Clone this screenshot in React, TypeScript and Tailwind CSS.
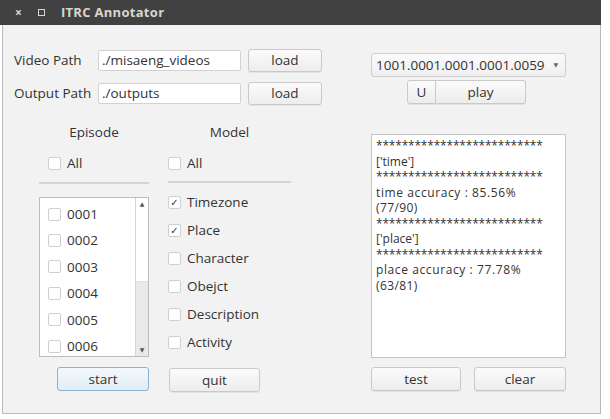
import React from 'react'

const font = "font-['Open_Sans','DejaVu_Sans',sans-serif]"

function Btn({ label, className = '' }: { label: string; className?: string }) {
  return (
    <div
      className={`flex items-center justify-center rounded-[3px] border border-[#c9c9c9] bg-gradient-to-b from-[#fbfbfb] to-[#ededed] text-[13.5px] text-[#333] shadow-[0_1px_0_rgba(0,0,0,0.06)] ${className}`}
    >
      {label}
    </div>
  )
}

function Check({ checked = false }: { checked?: boolean }) {
  return (
    <div className="flex h-[13px] w-[13px] shrink-0 items-center justify-center rounded-[2px] border border-[#cfcfcf] bg-white text-[10px] leading-none text-[#333]">
      {checked ? '✓' : ''}
    </div>
  )
}

function CheckRow({ label, checked, className = '' }: { label: string; checked?: boolean; className?: string }) {
  return (
    <div className={`flex shrink-0 items-center gap-[6px] text-[13.5px] text-[#333] ${className}`}>
      <Check checked={checked} />
      <span>{label}</span>
    </div>
  )
}

const stars = '**************************'

export default function App() {
  const episodes = ['0001', '0002', '0003', '0004', '0005', '0006']
  const models: [string, boolean][] = [
    ['Timezone', true],
    ['Place', true],
    ['Character', false],
    ['Obejct', false],
    ['Description', false],
    ['Activity', false],
  ]

  return (
    <div className={`h-[419px] w-[610px] overflow-hidden bg-white ${font}`}>
      <div className="w-[601px]">
        {/* Title bar */}
        <div className="flex h-[25px] items-center bg-[#414141] text-[#d8d5cf]">
          <span className="ml-[15px] text-[12px] font-bold leading-none">×</span>
          <span className="ml-[16px] flex h-[7px] w-[7px] items-center justify-center border-[1.5px] border-[#d8d5cf]" />
          <span className="ml-[16px] text-[13px] font-bold tracking-[0.3px]">ITRC Annotator</span>
        </div>

        {/* Body */}
        <div className="ml-[2px] flex h-[389px] border-x border-b border-[#b9b9b9] bg-[#f2f2f2]">
          {/* Left side */}
          <div className="ml-[11px] flex w-[320px] flex-col pt-[24px]">
            <div className="flex h-[23px] items-center">
              <span className="w-[84px] text-[13.5px] text-[#333]">Video Path</span>
              <div className="flex h-[21px] w-[143px] items-center rounded-[2px] border border-[#d2d2d2] bg-white px-[3px] text-[13.5px] text-[#333]">
                ./misaeng_videos
              </div>
              <Btn label="load" className="ml-[7px] h-[23px] w-[74px]" />
            </div>
            <div className="mt-[10px] flex h-[23px] items-center">
              <span className="w-[84px] text-[13.5px] text-[#333]">Output Path</span>
              <div className="flex h-[21px] w-[143px] items-center rounded-[2px] border border-[#d2d2d2] bg-white px-[3px] text-[13.5px] text-[#333]">
                ./outputs
              </div>
              <Btn label="load" className="ml-[7px] h-[23px] w-[74px]" />
            </div>

            <div className="ml-[25px] mt-[18px] flex gap-[19px]">
              {/* Episode column */}
              <div className="flex w-[110px] flex-col">
                <div className="h-[18px] text-center text-[13.5px] leading-[18px] text-[#333]">Episode</div>
                <CheckRow label="All" className="ml-[9px] mt-[13px] h-[18px]" />
                <div className="mt-[10px] h-[2px] bg-[#d4d4d4]" />
                <div className="mt-[13px] flex h-[160px] overflow-hidden border border-[#bdbdbd] bg-white">
                  <div className="flex flex-1 flex-col pt-[3px]">
                    {episodes.map((e) => (
                      <CheckRow key={e} label={e} className="ml-[8px] h-[26.4px]" />
                    ))}
                  </div>
                  <div className="flex w-[13px] flex-col border-l border-[#d6d6d6]">
                    <div className="flex h-[12px] items-center justify-center text-[6px] leading-none text-[#555]">▲</div>
                    <div className="h-[72px] border-b border-[#e0e0e0] bg-white" />
                    <div className="flex-1 bg-[#e9e9e9]" />
                    <div className="flex h-[12px] items-center justify-center bg-[#e9e9e9] text-[6px] leading-none text-[#555]">▼</div>
                  </div>
                </div>
                <div className="mt-[10px] ml-[18px] flex h-[24px] w-[92px] items-center justify-center rounded-[3px] border border-[#8db3cf] bg-gradient-to-b from-[#f3f8fc] to-[#e2edf5] text-[13.5px] text-[#333]">
                  start
                </div>
              </div>

              {/* Model column */}
              <div className="flex w-[123px] flex-col">
                <div className="h-[18px] text-center text-[13.5px] leading-[18px] text-[#333]">Model</div>
                <CheckRow label="All" className="mt-[13px] h-[18px]" />
                <div className="mt-[9px] h-[2px] bg-[#d4d4d4]" />
                <div className="mt-[5px] flex flex-col">
                  {models.map(([m, c]) => (
                    <CheckRow key={m} label={m} checked={c} className="h-[28px]" />
                  ))}
                </div>
                <Btn label="quit" className="ml-[1px] mt-[12px] h-[24px] w-[91px]" />
              </div>
            </div>
          </div>

          {/* Right side */}
          <div className="ml-[37px] flex w-[195px] flex-col pt-[28px]">
            <div className="flex h-[24px] items-center justify-between rounded-[3px] border border-[#cdcdcd] bg-gradient-to-b from-[#fbfbfb] to-[#efefef] pl-[4px] pr-[7px] text-[13.5px] text-[#333]">
              <span>1001.0001.0001.0001.0059</span>
              <span className="text-[6px] text-[#666]">▼</span>
            </div>
            <div className="ml-[36px] mt-[3px] flex">
              <Btn label="U" className="h-[24px] w-[29px] rounded-r-none" />
              <Btn label="play" className="h-[24px] w-[90px] rounded-l-none border-l-0" />
            </div>
            <div className="mt-[30px] h-[224px] border border-[#c4c4c4] bg-white px-[4px] pt-[3px] text-[12px] leading-[15.5px] text-[#333]">
              <div className="tracking-[-0.2px]">{stars}</div>
              <div>['time']</div>
              <div className="tracking-[-0.2px]">{stars}</div>
              <div className="tracking-[0.6px]">time accuracy : 85.56%</div>
              <div className="tracking-[0.4px]">(77/90)</div>
              <div className="tracking-[-0.2px]">{stars}</div>
              <div>['place']</div>
              <div className="tracking-[-0.2px]">{stars}</div>
              <div className="tracking-[0.6px]">place accuracy : 77.78%</div>
              <div className="tracking-[0.4px]">(63/81)</div>
            </div>
            <div className="mt-[9px] flex justify-between">
              <Btn label="test" className="h-[24px] w-[90px]" />
              <Btn label="clear" className="h-[24px] w-[92px]" />
            </div>
          </div>
        </div>
      </div>
    </div>
  )
}
